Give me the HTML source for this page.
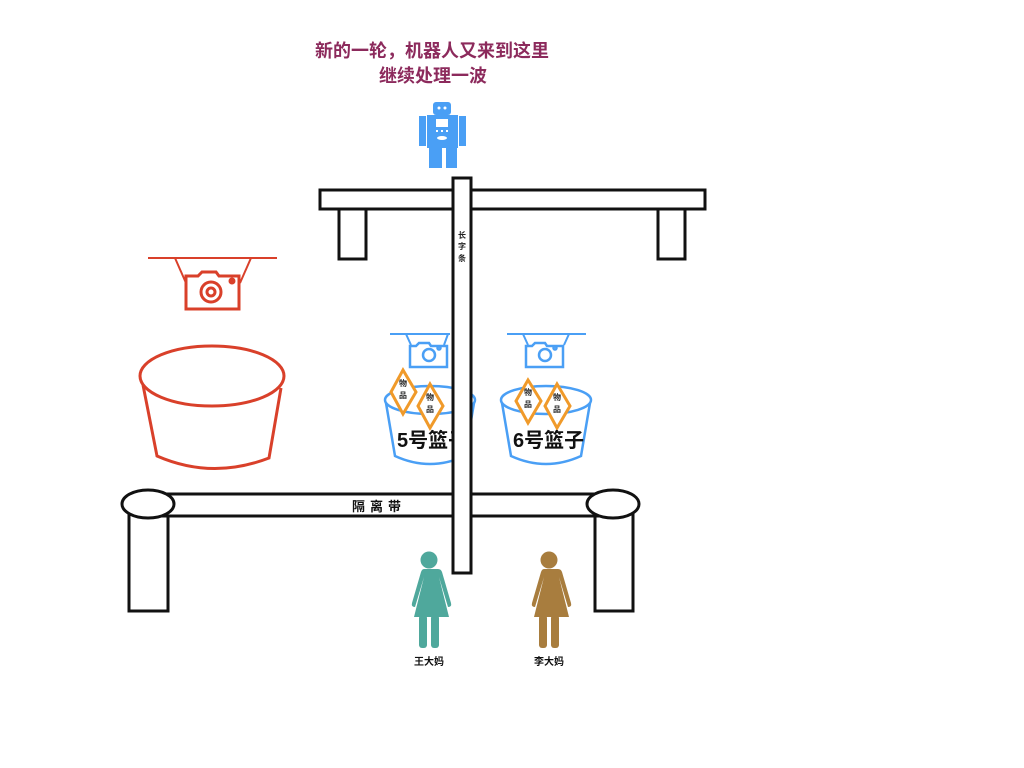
<!DOCTYPE html>
<html><head><meta charset="utf-8"><style>
html,body{margin:0;padding:0;background:#fff;width:1024px;height:768px;overflow:hidden}
svg{display:block}
text{font-family:"Liberation Sans","Noto Sans CJK SC",sans-serif;font-weight:bold}
</style></head><body>
<svg width="1024" height="768" viewBox="0 0 1024 768">
<text x="432" y="57" font-size="18" fill="#8c2a5c" text-anchor="middle">新的一轮，机器人又来到这里</text>
<text x="433" y="82" font-size="18" fill="#8c2a5c" text-anchor="middle">继续处理一波</text>

<g fill="#4a9ff5">
<rect x="433" y="102" width="18" height="13" rx="3"/>
<rect x="427" y="115" width="31" height="33"/>
<rect x="419" y="116" width="7" height="30"/>
<rect x="459" y="116" width="7" height="30"/>
<rect x="429" y="147" width="13" height="21"/>
<rect x="446" y="147" width="11" height="21"/>
</g>
<g fill="#fff"><circle cx="439" cy="108" r="1.5"/><circle cx="445" cy="108" r="1.5"/>
<rect x="436" y="119" width="12" height="8"/><ellipse cx="442" cy="138" rx="5" ry="2"/>
<rect x="436" y="130" width="2" height="2"/><rect x="441" y="130" width="2" height="2"/><rect x="446" y="130" width="2" height="2"/></g>

<g fill="#fff" stroke="#111" stroke-width="3">
<rect x="339" y="208" width="27" height="51"/>
<rect x="658" y="208" width="27" height="51"/>
<rect x="320" y="190" width="385" height="19"/>
</g>

<g stroke="#d9402a" fill="none" stroke-width="3">
<line x1="148" y1="258" x2="277" y2="258" stroke-width="2"/>
<line x1="175" y1="258" x2="186" y2="283" stroke-width="2"/>
<line x1="251" y1="258" x2="240" y2="283" stroke-width="2"/>
<path d="M186 276 h12 l4 -4 h14 l3 4 h20 v33 h-53 z"/>
<circle cx="211" cy="292" r="10"/><circle cx="211" cy="292" r="4"/>
<circle cx="232" cy="281" r="2" fill="#d9402a"/>
<ellipse cx="212" cy="376" rx="72" ry="30"/>
<path d="M143 385 L157 456 Q212 480 269 458 L281 388"/>
</g>

<g stroke="#4a9ff5" fill="none" stroke-width="2.5">
<line x1="390" y1="334" x2="450" y2="334" stroke-width="2"/>
<line x1="406" y1="334" x2="411" y2="345" stroke-width="2"/>
<line x1="448" y1="334" x2="444" y2="345" stroke-width="2"/>
<path d="M410 346 h6 l3 -3 h10 l2 3 h16 v21 h-37 z"/>
<circle cx="429" cy="355" r="6"/><circle cx="439" cy="348" r="1.5"/>
<line x1="507" y1="334" x2="586" y2="334" stroke-width="2"/>
<line x1="523" y1="334" x2="528" y2="345" stroke-width="2"/>
<line x1="569" y1="334" x2="564" y2="345" stroke-width="2"/>
<path d="M526 346 h6 l3 -3 h10 l2 3 h16 v21 h-37 z"/>
<circle cx="545" cy="355" r="6"/><circle cx="555" cy="348" r="1.5"/>
<ellipse cx="430" cy="400" rx="45" ry="14"/>
<path d="M386 403 L395 456 Q430 472 465 456 L474 403"/>
<ellipse cx="546" cy="400" rx="45" ry="14"/>
<path d="M502 403 L511 456 Q546 472 581 456 L590 403"/>
</g>
<g fill="#fff" stroke="#f09a2a" stroke-width="3">
<path d="M403 370 L416 392 L403 414 L391 392 Z"/>
<path d="M430 384 L443 406 L430 428 L418 406 Z"/>
<path d="M528 380 L541 401 L528 423 L516 401 Z"/>
<path d="M557 384 L570 406 L557 428 L545 406 Z"/>
</g>
<g font-size="8" fill="#222" text-anchor="middle">
<text x="403" y="386">物</text><text x="403" y="398">品</text>
<text x="430" y="400">物</text><text x="430" y="412">品</text>
<text x="528" y="395">物</text><text x="528" y="407">品</text>
<text x="557" y="400">物</text><text x="557" y="412">品</text>
</g>
<text x="397" y="447" font-size="20" fill="#111">5号篮子</text>
<text x="513" y="447" font-size="20" fill="#111">6号篮子</text>

<g fill="#fff" stroke="#111" stroke-width="3">
<rect x="129" y="512" width="39" height="99"/>
<rect x="595" y="512" width="38" height="99"/>
<rect x="145" y="494" width="460" height="22"/>
<ellipse cx="148" cy="504" rx="26" ry="14"/>
<ellipse cx="613" cy="504" rx="26" ry="14"/>
</g>
<text x="379" y="511" font-size="13" fill="#111" text-anchor="middle" letter-spacing="5">隔离带</text>

<rect x="453" y="178" width="18" height="395" fill="#fff" stroke="#111" stroke-width="3"/>
<g font-size="8" fill="#222" text-anchor="middle">
<text x="462" y="238">长</text><text x="462" y="249">字</text><text x="462" y="261">条</text>
</g>

<g fill="#4fa89c">
<circle cx="429" cy="560" r="8.5"/>
<path d="M420 569 h18 q3 0 4 3 l9 31 q1 4 -3 4 l-9 -30 l10 40 h-35 l10 -40 l-9 30 q-4 0 -3 -4 l9 -31 q1 -3 3 -3 z"/>
<rect x="419" y="615" width="8" height="33" rx="3"/><rect x="431" y="615" width="8" height="33" rx="3"/>
</g>
<g fill="#a87d3e">
<circle cx="549" cy="560" r="8.5"/>
<path d="M540 569 h18 q3 0 4 3 l9 31 q1 4 -3 4 l-9 -30 l10 40 h-35 l10 -40 l-9 30 q-4 0 -3 -4 l9 -31 q1 -3 3 -3 z"/>
<rect x="539" y="615" width="8" height="33" rx="3"/><rect x="551" y="615" width="8" height="33" rx="3"/>
</g>
<text x="429" y="665" font-size="10" fill="#111" text-anchor="middle">王大妈</text>
<text x="549" y="665" font-size="10" fill="#111" text-anchor="middle">李大妈</text>
</svg>
</body></html>
